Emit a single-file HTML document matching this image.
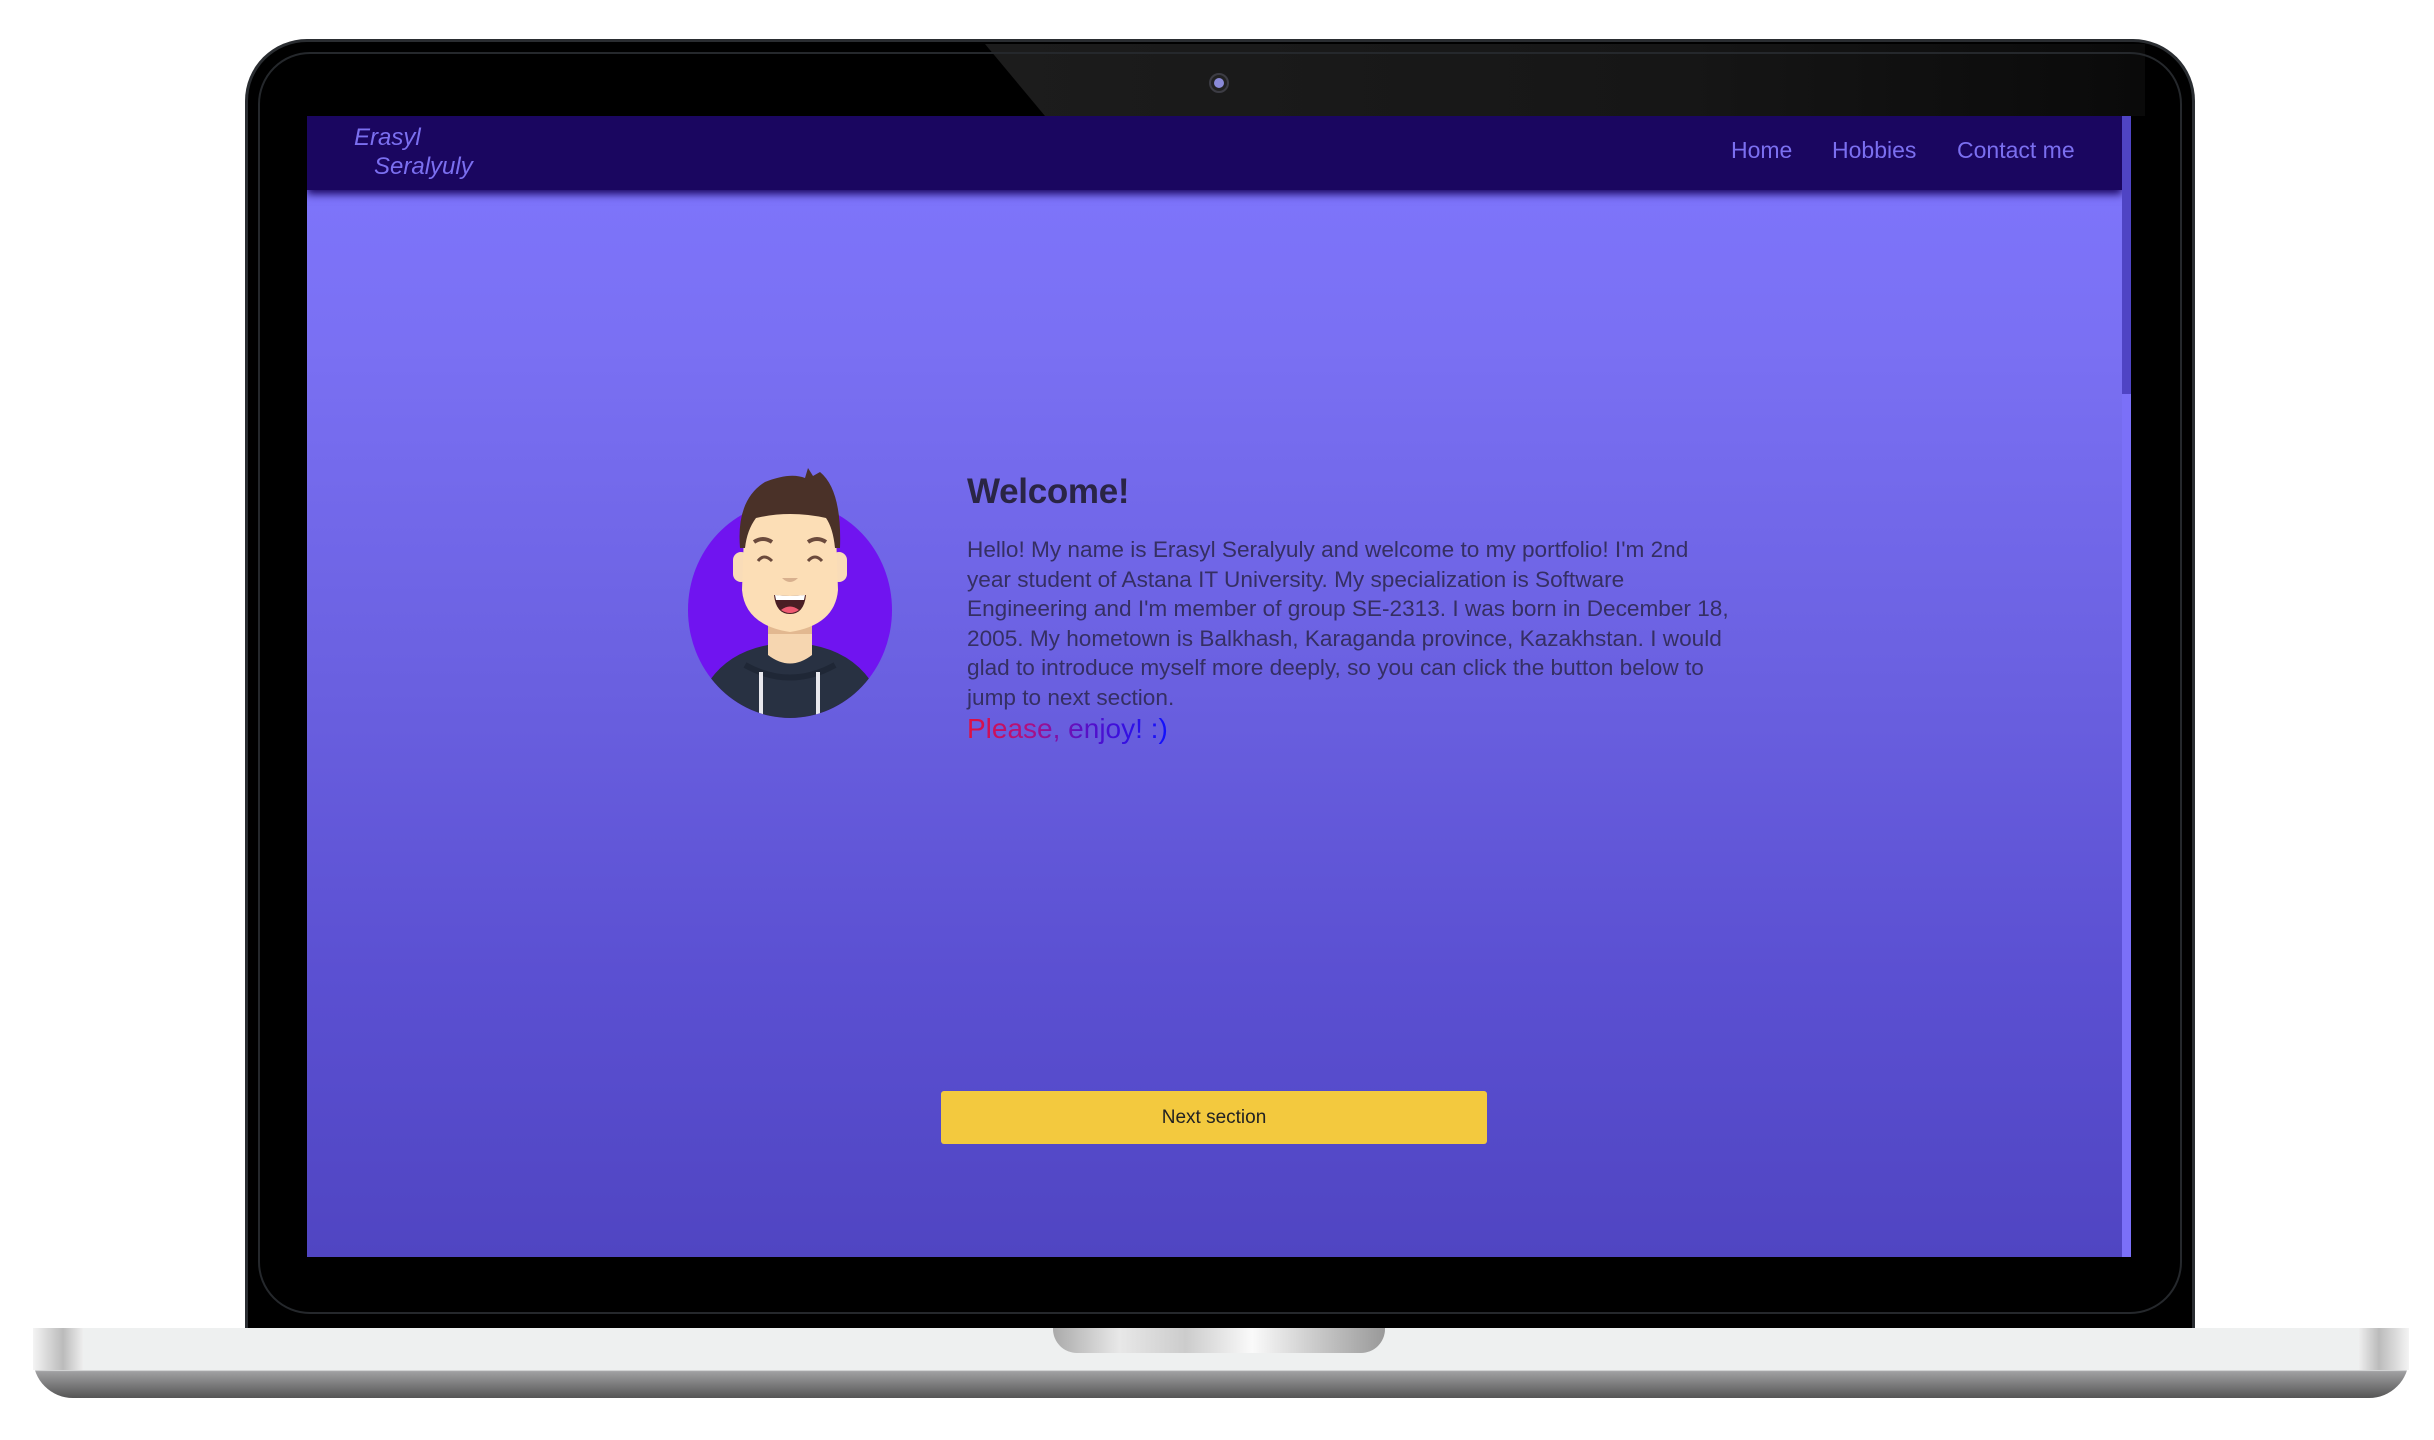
<!DOCTYPE html>
<html><head><meta charset="utf-8"><style>
*{margin:0;padding:0;box-sizing:border-box}
body{width:2434px;height:1440px;background:#fff;position:relative;overflow:hidden;font-family:"Liberation Sans",Arial,sans-serif}
.abs{position:absolute}
#bezel{left:245px;top:39px;width:1950px;height:1290px;background:#000;border-radius:62px 62px 0 0;border:3px solid #2a2d31;border-bottom:none;overflow:hidden}
#bezelIn{left:258px;top:52px;width:1924px;height:1262px;border-radius:52px;border:2px solid #25282c}
#glare{left:985px;top:44px;width:1160px;height:72px;background:linear-gradient(90deg,#1c1c1c,#161616 60%,#0a0a0a);clip-path:polygon(0 0,100% 0,100% 100%,60px 100%)}
#cam1{left:1209px;top:73px;width:20px;height:20px;border-radius:50%;border:2px solid #3c3c44;background:#222}
#cam2{left:1214px;top:78px;width:10px;height:10px;border-radius:50%;background:#8a8ad8}
#screen{left:307px;top:116px;width:1824px;height:1141px;background:linear-gradient(#7f76fe 0%,#7a70f3 20%,#6a60e0 50%,#5b50d2 75%,#5045c2 100%);overflow:hidden}
#nav{left:0;top:0;width:1815px;height:74px;background:#1a0660;box-shadow:0 4px 8px #1a0660}
.logo{color:#7b6ff0;font-style:italic;font-size:24px}
.nl{color:#7b6ff0;font-size:23px;top:21px}
#sb{left:1815px;top:0;width:9px;height:1141px;background:#7b70f8}
#thumb{left:1815px;top:0;width:9px;height:278px;background:#4f44c4}
h1{position:absolute;left:660px;top:356px;font-size:35px;color:#2a2545;font-weight:bold;letter-spacing:-0.3px}
p.t{position:absolute;left:660px;top:419px;white-space:nowrap;font-size:22.6px;line-height:29.5px;color:#352f63}
.pl{position:absolute;left:660px;top:597px;font-size:28px;background:linear-gradient(90deg,#e0103e 0%,#b01080 30%,#6010c0 55%,#1010ff 100%);-webkit-background-clip:text;background-clip:text;color:transparent}
#btn{left:634px;top:975px;width:546px;height:53px;background:#f3c93e;border-radius:3px;color:#222;font-size:19px;text-align:center;line-height:53px}
#base{left:33px;top:1328px;width:2376px;height:70px;border-radius:0 0 40px 40px;background:linear-gradient(#eef0f0 0%,#eef0f0 60%,#a0a0a2 62%,#555 100%)}
#baseL{left:33px;top:1328px;width:50px;height:42px;background:linear-gradient(90deg,#f4f4f4,#bbb 60%,#eee)}
#baseR{left:2359px;top:1328px;width:50px;height:42px;background:linear-gradient(90deg,#eee,#bbb 40%,#f4f4f4)}
#notch{left:1053px;top:1328px;width:332px;height:25px;border-radius:0 0 24px 24px;background:linear-gradient(90deg,#aaa,#e8e8e8 20%,#ccc 40%,#fafafa 60%,#c8c8c8 80%,#999)}
</style></head><body>
<div id="bezel" class="abs"></div>
<div id="glare" class="abs"></div>
<div id="bezelIn" class="abs"></div>
<div id="cam1" class="abs"></div><div id="cam2" class="abs"></div>
<div id="screen" class="abs">
 <div id="nav" class="abs">
  <div class="abs logo" style="left:47px;top:8px">Erasyl</div>
  <div class="abs logo" style="left:67px;top:37px">Seralyuly</div>
  <div class="abs nl" style="left:1424px">Home</div>
  <div class="abs nl" style="left:1525px">Hobbies</div>
  <div class="abs nl" style="left:1650px">Contact me</div>
 </div>
 <div id="thumb" class="abs"></div>
 <div id="sb" class="abs" style="top:278px;height:863px"></div>
 <svg class="abs" style="left:343px;top:324px" width="300" height="300" viewBox="0 0 300 300">
  <defs><clipPath id="c"><ellipse cx="140" cy="170" rx="102" ry="108"/></clipPath></defs>
  <ellipse cx="140" cy="170" rx="102" ry="108" fill="#7014f0"/>
  <g clip-path="url(#c)">
   <path d="M40 300 L60 240 Q80 212 118 205 L162 205 Q200 212 220 240 L240 300Z" fill="#283142"/>
   <path d="M95 225 Q140 250 185 225" stroke="#1f2736" stroke-width="6" fill="none"/>
   <rect x="109" y="232" width="4" height="48" fill="#e8e8ee"/>
   <rect x="166" y="232" width="4" height="48" fill="#e8e8ee"/>
  </g>
  <path d="M118 176 L162 176 L162 215 Q140 232 118 215Z" fill="#f6d6b0"/>
  <rect x="118" y="186" width="44" height="8" fill="#e2b890"/>
  <rect x="83" y="112" width="16" height="30" rx="8" fill="#f9dcb8"/>
  <rect x="181" y="112" width="16" height="30" rx="8" fill="#f9dcb8"/>
  <path d="M95 66 L185 66 L188 150 Q185 185 140 192 Q95 185 92 150Z" fill="#fcdeb6"/>
  <path d="M90 108 Q86 60 115 42 Q140 32 155 38 L158 28 L163 36 L170 32 Q192 50 190 108 L185 108 Q183 88 176 78 Q140 70 106 78 Q97 90 95 108Z" fill="#4a3128"/>
  <path d="M104 102 Q113 96 122 102" stroke="#6b4a3c" stroke-width="4" fill="none"/>
  <path d="M158 102 Q167 96 176 102" stroke="#6b4a3c" stroke-width="4" fill="none"/>
  <path d="M108 121 Q114 113 122 121" stroke="#6b4a3c" stroke-width="3" fill="none"/>
  <path d="M158 121 Q165 113 172 121" stroke="#6b4a3c" stroke-width="3" fill="none"/>
  <path d="M132 138 L148 138 Q140 146 132 138Z" fill="#d8b08e"/>
  <path d="M124 155 Q140 157 156 155 Q154 174 140 174 Q126 174 124 155Z" fill="#4a1e24"/>
  <path d="M125 155 Q140 157 155 155 L154 160 L126 160Z" fill="#fff"/>
  <path d="M131 170 Q140 163 149 170 Q140 176 131 170Z" fill="#ef5a72"/>
 </svg>
 <h1>Welcome!</h1>
 <p class="t">Hello! My name is Erasyl Seralyuly and welcome to my portfolio! I'm 2nd<br>year student of Astana IT University. My specialization is Software<br>Engineering and I'm member of group SE-2313. I was born in December 18,<br>2005. My hometown is Balkhash, Karaganda province, Kazakhstan. I would<br>glad to introduce myself more deeply, so you can click the button below to<br>jump to next section.</p>
 <div class="pl">Please, enjoy! :)</div>
 <div id="btn" class="abs">Next section</div>
</div>
<div id="base" class="abs"></div>
<div id="baseL" class="abs"></div>
<div id="baseR" class="abs"></div>
<div id="notch" class="abs"></div>
</body></html>
